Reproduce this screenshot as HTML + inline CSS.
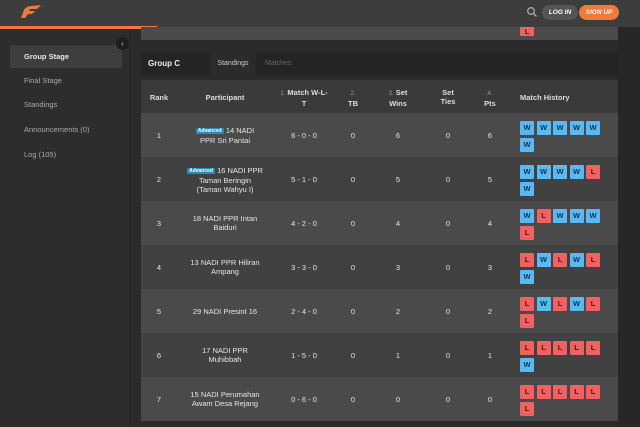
<!DOCTYPE html>
<html><head><meta charset="utf-8"><style>
*{margin:0;padding:0;box-sizing:border-box}
body{width:640px;height:427px;overflow:hidden;background:#2e2e2e;font-family:"Liberation Sans",sans-serif;color:#ddd;position:relative}
.hdr{position:absolute;left:0;top:0;width:640px;height:27px;background:#3d3d3d}
.orange{position:absolute;left:0;top:26px;width:158px;height:3px;background:#f07a3c;clip-path:polygon(0 0,100% 0,97% 100%,0 100%)}
.side{position:absolute;left:0;top:29px;width:130px;height:398px;background:#2d2d2d;border-right:1px solid #262626}
.side div{position:absolute;left:10px;width:112px;height:23px;font-size:7.5px;color:#aaa;padding-left:14px;line-height:23px}
.side .act{background:#3e3e3e;color:#e8e8e8;font-weight:bold}
.coll{position:absolute;left:116px;top:37px;width:13px;height:13px;border-radius:50%;background:#1e1e1e;color:#bbb;font-size:8px;text-align:center;line-height:13px}
.main{position:absolute;left:130px;top:29px;width:488px;height:398px;background:#2b2b2b}
.right{position:absolute;left:618px;top:27px;width:22px;height:400px;background:#272727}
.topcard{position:absolute;left:141px;top:27px;width:477px;height:13px;background:#4b4b4b}
.gh{position:absolute;left:141px;top:52px;width:477px;height:24px;background:#242424}
.th{position:absolute;left:141px;top:80px;width:477px;height:33px;background:#3a3a3a}
.row{position:absolute;left:141px;width:477px;height:44px}
.c{position:absolute;text-align:center;font-size:7.5px;line-height:9px;color:#e6e6e6}
.h{font-weight:bold;color:#ddd}
.h span{color:#999;font-weight:normal;font-size:6px}
.b{position:absolute;width:14px;height:14px;font-size:7.5px;font-weight:bold;text-align:center;line-height:14px;border-radius:1px}
.W{background:#5ab9f5;color:#12324a}.L{background:#f06262;color:#5a1010}
.adv{background:#2b8ab8;color:#fff;font-size:5px;padding:0 2px;border-radius:1px;font-weight:bold;vertical-align:1px}
</style></head><body>
<div class="hdr"></div>
<svg style="position:absolute;left:19px;top:5px" width="24" height="14" viewBox="0 0 24 14"><path d="M2 13 L5 5 Q7 1 13 1 L22 0 L18 4 L11 4 L10 6 L16 6 L13 9 L9 9 L6 13 Z" fill="#f07a3c"/></svg>
<div class="orange"></div>
<svg style="position:absolute;left:526px;top:6px" width="12" height="12" viewBox="0 0 12 12"><circle cx="5" cy="5" r="3.3" stroke="#aaa" stroke-width="1.3" fill="none"/><path d="M7.5 7.5 L10.5 10.5" stroke="#aaa" stroke-width="1.4"/></svg>
<div style="position:absolute;left:542px;top:5px;width:36px;height:15px;border-radius:8px;background:#555;color:#fff;font-size:6.5px;font-weight:bold;font-style:italic;text-align:center;line-height:15px">LOG IN</div>
<div style="position:absolute;left:579px;top:5px;width:40px;height:15px;border-radius:8px;background:#f07a3c;color:#fff;font-size:6.5px;font-weight:bold;font-style:italic;text-align:center;line-height:15px">SIGN UP</div>
<div class="main"></div>
<div class="right"></div>
<div class="side">
<div class="act" style="top:16px">Group Stage</div>
<div style="top:40px">Final Stage</div>
<div style="top:64px">Standings</div>
<div style="top:89px">Announcements (0)</div>
<div style="top:114px">Log (105)</div>
</div>
<div class="coll">‹</div>
<div class="topcard"></div>
<div class="b L" style="left:520px;top:27px;height:9px;line-height:9px">L</div>
<div class="gh">
<div style="position:absolute;left:7px;top:0;line-height:24px;font-size:8px;font-weight:bold;color:#eee">Group C</div>
<div style="position:absolute;left:69px;top:0;width:46px;height:24px;background:#2b2b2b;line-height:24px;font-size:7px;color:#ccc;text-align:center">Standings</div>
<div style="position:absolute;left:124px;top:0;line-height:24px;font-size:7px;color:#666">Matches</div>
</div>
<div class="th">
<div class="c h" style="left:0;width:36px;top:13px">Rank</div>
<div class="c h" style="left:48px;width:72px;top:13px">Participant</div>
<div class="c h" style="left:133px;width:60px;top:8px"><span>1.</span> Match W-L-<br>T</div>
<div class="c h" style="left:200px;width:24px;top:8px"><span>2.</span><br>TB</div>
<div class="c h" style="left:236px;width:42px;top:8px"><span>3.</span> Set<br>Wins</div>
<div class="c h" style="left:290px;width:34px;top:8px">Set<br>Ties</div>
<div class="c h" style="left:336px;width:26px;top:8px"><span>4.</span><br>Pts</div>
<div class="c h" style="left:379px;top:13px;text-align:left">Match History</div>
</div>
<div id="rows"></div>
<script>
var d=[["1",'<span class="adv">Advanced</span> 14 NADI<br>PPR Sri Pantai',"6 - 0 - 0","6","6","WWWWWW"],
["2",'<span class="adv">Advanced</span> 16 NADI PPR<br>Taman Beringin<br>(Taman Wahyu I)',"5 - 1 - 0","5","5","WWWWLW"],
["3","18 NADI PPR Intan<br>Baiduri","4 - 2 - 0","4","4","WLWWWL"],
["4","13 NADI PPR Hiliran<br>Ampang","3 - 3 - 0","3","3","LWLWLW"],
["5","29 NADI Presint 16","2 - 4 - 0","2","2","LWLWLL"],
["6","17 NADI PPR<br>Muhibbah","1 - 5 - 0","1","1","LLLLLW"],
["7","15 NADI Perumahan<br>Awam Desa Rejang","0 - 6 - 0","0","0","LLLLLL"]];
var h="";
d.forEach(function(r,i){var top=113+i*44;var lines=r[1].split("<br>").length;var pt=22-lines*4.5;
h+='<div class="row" style="top:'+top+'px;background:'+(i%2?'#414141':'#4a4a4a')+'">';
h+='<div class="c" style="left:0;width:36px;top:18px">'+r[0]+'</div>';
h+='<div class="c" style="left:36px;width:96px;top:'+pt+'px">'+r[1]+'</div>';
h+='<div class="c" style="left:133px;width:60px;top:18px">'+r[2]+'</div>';
h+='<div class="c" style="left:200px;width:24px;top:18px">0</div>';
h+='<div class="c" style="left:236px;width:42px;top:18px">'+r[3]+'</div>';
h+='<div class="c" style="left:290px;width:34px;top:18px">0</div>';
h+='<div class="c" style="left:336px;width:26px;top:18px">'+r[4]+'</div>';
for(var k=0;k<6;k++){var x=379+(k%5)*16.5,y=k<5?8:25;h+='<div class="b '+r[5][k]+'" style="left:'+x+'px;top:'+y+'px">'+r[5][k]+'</div>';}
h+='</div>';});
document.getElementById("rows").innerHTML=h;
</script>
</body></html>
